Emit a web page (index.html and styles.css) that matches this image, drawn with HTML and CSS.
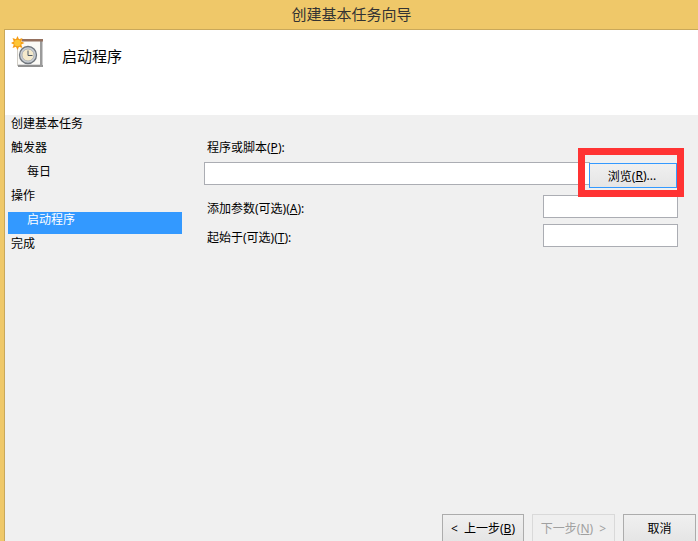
FILE: index.html
```html
<!DOCTYPE html>
<html lang="zh-CN">
<head>
<meta charset="utf-8">
<title>创建基本任务向导</title>
<link rel="stylesheet" href="styles.css">
</head>
<body>
<div class="window">
  <div class="titlebar">创建基本任务向导</div>
  <div class="client">
    <header class="banner">
      <svg class="banner-icon" width="34" height="34" viewBox="0 0 34 34">
        <rect x="6.5" y="4.500" width="24" height="25" fill="#fbfaf6" stroke="#cfccc4"/>
        <rect x="7" y="28" width="24" height="1" fill="#dcdcdc"/>
        <rect x="7" y="29" width="25" height="2" fill="#8f8f8f"/>
        <rect x="29" y="5" width="2.500" height="26" fill="#9a9a9a"/>
        <rect x="11" y="3" width="21" height="2.500" fill="#94705e"/>
        <circle cx="17" cy="19" r="8.500" fill="#c9ced4" stroke="#6f757c" stroke-width="1.300"/>
        <circle cx="17" cy="19" r="6" fill="#f5eacb" stroke="#a4a9ae" stroke-width=".8"/>
        <path d="M17 14.500V19.500H21.500" fill="none" stroke="#4d5a68" stroke-width="1"/>
        <path d="M13.500 7 10.200 8.500 11.450 11.950 8.030 10.700 6.500 14 4.970 10.700 1.550 11.950 2.800 8.530 0 7 2.800 5.470 1.550 2.050 4.970 3.300 6.500 0 8.030 3.300 11.450 2.050 10.200 5.470Z" fill="#f59c14"/>
        <circle cx="6.500" cy="7" r="3.300" fill="#fdc534"/>
      </svg>
      <span class="banner-title">启动程序</span>
    </header>
    <div class="content">
      <nav class="steps">
        <div class="step">创建基本任务</div>
        <div class="step">触发器</div>
        <div class="step step-sub">每日</div>
        <div class="step">操作</div>
        <div class="step step-sub step-active">启动程序</div>
        <div class="step">完成</div>
      </nav>
      <main class="form">
        <div class="form-fields">
          <div class="label-top">程序或脚本(<u>P</u>):</div>
          <div class="program-row">
            <div class="input input-wide"></div>
            <div class="btn btn-browse">浏览(<u>R</u>)...</div>
          </div>
          <div class="field-row">
            <span class="field-label">添加参数(可选)(<u>A</u>):</span>
            <div class="input input-short"></div>
          </div>
          <div class="field-row">
            <span class="field-label">起始于(可选)(<u>T</u>):</span>
            <div class="input input-short"></div>
          </div>
        </div>
        <footer class="actions">
          <div class="btn btn-back">&lt; 上一步(<u>B</u>)</div>
          <div class="btn btn-next">下一步(<u>N</u>) &gt;</div>
          <div class="btn btn-cancel">取消</div>
        </footer>
      </main>
    </div>
  </div>
</div>
<div class="highlight"></div>
</body>
</html>
```
FILE: styles.css
```css
* { box-sizing: border-box; }
html, body { margin: 0; height: 100%; overflow: hidden; }
body {
  position: relative;
  font-family: "Noto Sans", "Noto Sans CJK SC", sans-serif;
  font-size: 12px;
  color: #000;
  background: #f0f0f0;
}
.window {
  display: flex;
  flex-direction: column;
  width: 698px;
  height: 541px;
  background: #efc869;
}
.titlebar {
  height: 29px;
  line-height: 29px;
  padding-left: 5px;
  text-align: center;
  font-size: 15px;
  color: #333;
  flex: none;
}
.client {
  flex: 1;
  display: flex;
  flex-direction: column;
  margin-left: 4px;
  border-top: 1px solid #c9a85a;
  border-left: 1px solid #c9a85a;
  background: #f0f0f0;
  min-height: 0;
}
.banner {
  flex: none;
  height: 85px;
  background: #fff;
  display: flex;
  align-items: flex-start;
  padding: 6px 0 0 6px;
}
.banner-icon { flex: none; }
.banner-title {
  margin: 9px 0 0 17px;
  font-size: 15px;
  line-height: 22px;
}
.content {
  flex: 1;
  display: flex;
  min-height: 0;
}
.steps {
  flex: none;
  width: 177px;
  padding: 0 0 0 3px;
  margin-top: -1px;
  margin-right: 22px;
}
.step {
  height: 22px;
  line-height: 15px;
  margin-top: 2px;
  padding-left: 3px;
  white-space: nowrap;
}
.step-sub { padding-left: 19px; }
.step-active {
  background: #3399ff;
  color: #fff;
}
.form {
  flex: 1;
  display: flex;
  flex-direction: column;
  min-width: 0;
  padding-right: 2px;
}
.form-fields { flex: 1; }
.label-top {
  height: 47px;
  padding: 24px 0 0 3px;
  line-height: 18px;
  white-space: nowrap;
}
.program-row {
  display: flex;
  align-items: flex-start;
  height: 33px;
}
.input {
  background: #fff;
  border: 1px solid #abadb3;
  height: 23px;
}
.input-wide { width: 386px; flex: none; }
.input-short { width: 135px; flex: none; margin-right: 18px; }
.field-row {
  display: flex;
  justify-content: space-between;
  align-items: flex-start;
  height: 29px;
}
.field-label {
  padding: 5px 0 0 3px;
  line-height: 18px;
  white-space: nowrap;
}
.btn {
  display: flex;
  align-items: center;
  justify-content: center;
  border: 1px solid #acacac;
  background: linear-gradient(#f0f0f0, #e5e5e5);
  white-space: nowrap;
  word-spacing: 3px;
}
.btn-browse {
  width: 88px;
  height: 25px;
  margin: 1px 0 0 -1px;
  padding: 0 2px 0 0;
  border-color: #3399ff;
}
.actions {
  flex: none;
  display: flex;
  height: 27px;
  gap: 8px;
  padding-left: 238px;
}
.actions .btn { height: 28px; }
.btn-back { width: 82px; }
.btn-next { width: 83px; color: #a0a0a0; border-color: #d9d9d9; background: #efefef; }
.btn-cancel { width: 73px; }
.highlight {
  position: absolute;
  left: 578px;
  top: 148px;
  width: 106px;
  height: 49px;
  border: 7px solid #ff3333;
  pointer-events: none;
}
```
